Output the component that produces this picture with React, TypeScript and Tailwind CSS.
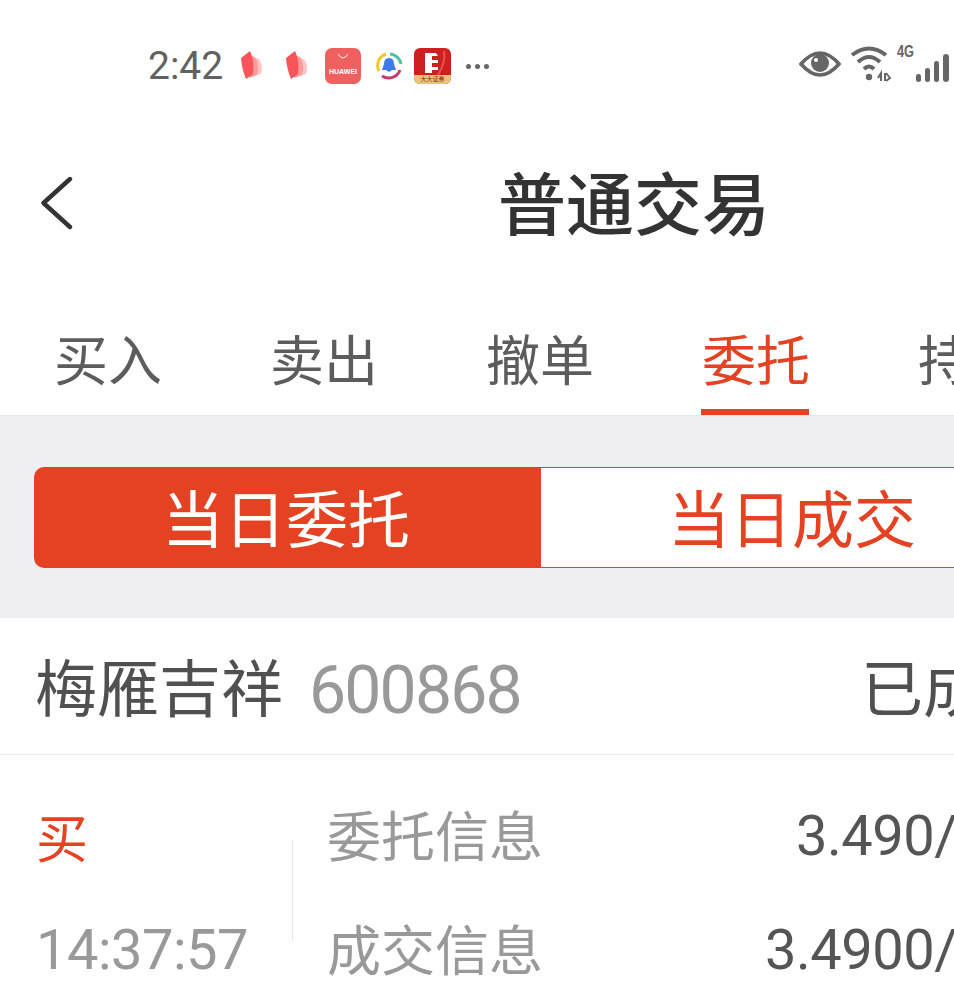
import React from "react";

const font = { fontFamily: '"Noto Sans","Noto Sans CJK SC",sans-serif' };
const digits = { fontFamily: 'Roboto,"Noto Sans",sans-serif' };

function Book() {
  return (
    <svg width="26" height="32" viewBox="0 0 26 32">
      <path d="M9 6 L19 9 Q24 16 21 24 L11 27Z" fill="#fcc6c6" />
      <path d="M7 4 L15 7 Q20 15 17 25 L9 28Z" fill="#fb9c9c" />
      <path d="M1 8 L10 1 Q15 12 13 24 L6 29 Q2 20 1 8Z" fill="#f7555a" />
    </svg>
  );
}

function StatusBar() {
  return (
    <div className="flex h-[130px] items-start pt-[46px] justify-between">
      <div className="flex items-center ml-[148px] h-[40px]">
        <span className="text-[39px] leading-[40px] text-[#616161] w-[92px]" style={digits}>2:42</span>
        <Book />
        <div className="w-[19px]" />
        <Book />
        <div className="ml-[14px] w-[36px] h-[36px] rounded-[7px] bg-[#f0605f] flex flex-col items-center text-white">
          <svg width="14" height="8" viewBox="0 0 14 8" className="mt-[5px]">
            <path d="M2 1 Q7 9 12 1" fill="none" stroke="#fff" strokeWidth="1" />
          </svg>
          <span className="text-[7px] leading-[8px] mt-[7px] font-bold" style={{ fontFamily: '"Liberation Sans"' }}>HUAWEI</span>
        </div>
        <svg width="30" height="30" viewBox="0 0 30 30" className="ml-[13px]">
          <path d="M5 20 A12 12 0 0 1 12 3" fill="none" stroke="#f3c82f" strokeWidth="3" />
          <path d="M16 3 A12 12 0 0 1 27 13" fill="none" stroke="#4cc1a2" strokeWidth="3" />
          <path d="M26 19 A12 12 0 0 1 8 25" fill="none" stroke="#c93a6d" strokeWidth="3" />
          <path d="M15 7 Q20 7 20 13 L22 19 L18 19 L15 21 L12 19 L8 19 L10 13 Q10 7 15 7Z" fill="#3d7be8" />
        </svg>
        <div className="ml-[10px] w-[37px] h-[36px] rounded-[6px] bg-[#cf2020] relative overflow-hidden">
          <svg width="37" height="36" viewBox="0 0 37 36" className="absolute inset-0">
            <path d="M11 5 L22 5 L24 8 L18 8 L18 12 L24 12 L24 15 L18 15 L18 19 L24 19 L24 22 L18 22 L18 25 L11 25Z" fill="#fff" />
            <path d="M30 3 Q32 14 24 27" fill="none" stroke="#e85050" strokeWidth="2" />
          </svg>
          <div className="absolute left-0 right-0 bottom-0 h-[9px] bg-[#e9c27b] text-[6px] leading-[9px] text-center text-[#7a2a10]">大大证券</div>
        </div>
        <div className="ml-[15px] flex gap-[4px]">
          <div className="w-[5px] h-[5px] rounded-full bg-[#666]" />
          <div className="w-[5px] h-[5px] rounded-full bg-[#666]" />
          <div className="w-[5px] h-[5px] rounded-full bg-[#666]" />
        </div>
      </div>
      <div className="flex items-start shrink-0 w-[155px] -mt-[2px]">
        <svg width="42" height="30" viewBox="0 0 42 30" className="mt-[5px]">
          <path d="M2 15 Q21 -7 40 15 Q21 37 2 15Z" fill="none" stroke="#666" strokeWidth="3.6" />
          <circle cx="21" cy="14" r="9" fill="#666" />
          <circle cx="17" cy="11" r="2" fill="#fff" />
        </svg>
        <svg width="42" height="38" viewBox="0 0 42 38" className="ml-[9px] mt-[1px]">
          <path d="M2 10 Q19 -3 36 10" fill="none" stroke="#666" strokeWidth="4" />
          <path d="M8 17 Q19 7 30 17" fill="none" stroke="#666" strokeWidth="4" />
          <path d="M14 24 Q19 19 24 24" fill="none" stroke="#666" strokeWidth="4" />
          <circle cx="19" cy="32" r="3.2" fill="#666" />
          <path d="M28 33 L31 28 L31 36 M35 28 L35 36 M36 28 L40 33 L36 36" fill="none" stroke="#666" strokeWidth="2" />
        </svg>
        <div className="relative ml-[5px] w-[36px] h-[40px]">
          <span className="absolute left-0 top-0 text-[17px] leading-[16px] font-bold text-[#666] scale-x-75 origin-left" style={{ fontFamily: '"Liberation Sans"' }}>4G</span>
          <svg width="36" height="36" viewBox="0 0 36 36" className="absolute left-[18px] top-[3px]">
            <rect x="1" y="27" width="5" height="8" rx="2.5" fill="#666" />
            <rect x="10" y="21" width="5" height="14" rx="2.5" fill="#666" />
            <rect x="19" y="14" width="5" height="21" rx="2.5" fill="#666" />
            <rect x="28" y="7" width="6" height="28" rx="3" fill="#666" />
          </svg>
        </div>
      </div>
    </div>
  );
}

function Tab({ label, active }: { label: string; active?: boolean }) {
  return (
    <div className="w-[216px] shrink-0 h-[130px] flex flex-col items-center">
      <div className={`h-[124px] flex items-center text-[54px] leading-none pt-[26px] ${active ? "text-[#e44222]" : "text-[#5c5c5c]"}`}>{label}</div>
      {active && <div className="w-[108px] h-[6px] mr-[2px] bg-[#e44222]" />}
    </div>
  );
}

function InfoRow({ label, value, start }: { label: string; value: string; start: string }) {
  return (
    <div className="flex items-center h-[114px]">
      <span className="text-[54px] leading-none text-[#999] w-[438px] shrink-0">{label}</span>
      <span className={`text-[56px] tracking-[-0.5px] leading-none text-[#555] whitespace-nowrap ${start}`} style={digits}>{value}</span>
    </div>
  );
}

export default function App() {
  return (
    <div className="w-[954px] h-[1008px] overflow-hidden bg-white" style={font}>
      <StatusBar />
      <div className="h-[155px] flex items-center pb-[7px]">
        <svg width="36" height="56" viewBox="0 0 36 56" className="ml-[38px] shrink-0">
          <path d="M32 3 L5.5 27 L32 51" fill="none" stroke="#333" strokeWidth="4.4" strokeLinecap="round" strokeLinejoin="round" />
        </svg>
        <span className="ml-[424px] text-[68px] leading-none text-[#333] whitespace-nowrap font-medium">普通交易</span>
      </div>
      <div className="flex overflow-hidden h-[130px]">
        <Tab label="买入" />
        <Tab label="卖出" />
        <Tab label="撤单" />
        <Tab label="委托" active />
        <Tab label="持仓" />
      </div>
      <div className="h-[203px] bg-[#eeeef3] border-t border-[#e8e8ec] flex items-center overflow-hidden">
        <div className="ml-[34px] flex shrink-0 h-[101px] w-[1014px]">
          <div className="w-[507px] bg-[#e44222] text-white rounded-l-[10px] text-[62px] leading-none flex items-center justify-center pt-[3px] pr-[3px]">当日委托</div>
          <div className="w-[507px] bg-white text-[#e44222] border-y border-[#e44222] text-[62px] leading-none flex items-center justify-center pt-[3px] pr-[5px]">当日成交</div>
        </div>
      </div>
      <div className="h-[137px] border-b border-[#e8e8e8] flex items-center overflow-hidden pt-[3px]">
        <div className="ml-[35px] flex items-center shrink-0">
          <span className="text-[62px] leading-none text-[#505050] w-[274px]">梅雁吉祥</span>
          <span className="text-[66px] tracking-[-1.8px] leading-none text-[#999] w-[552px] mt-[6px]" style={digits}>600868</span>
          <span className="text-[62px] leading-none text-[#505050]">已成</span>
        </div>
      </div>
      <div className="flex overflow-hidden">
        <div className="w-[293px] shrink-0 border-r border-[#e8e8e8] mt-[85px] h-[101px] relative">
          <span className="absolute left-[36px] -top-[28px] text-[52px] leading-none text-[#e44222]">买</span>
          <span className="absolute left-[36px] top-[82px] text-[56px] tracking-[-0.5px] leading-none text-[#999] whitespace-nowrap" style={digits}>14:37:57</span>
        </div>
        <div className="ml-[34px] pt-[24px] shrink-0">
          <InfoRow label="委托信息" value="3.490/" start="ml-[31px]" />
          <InfoRow label="成交信息" value="3.4900/" start="" />
        </div>
      </div>
    </div>
  );
}
